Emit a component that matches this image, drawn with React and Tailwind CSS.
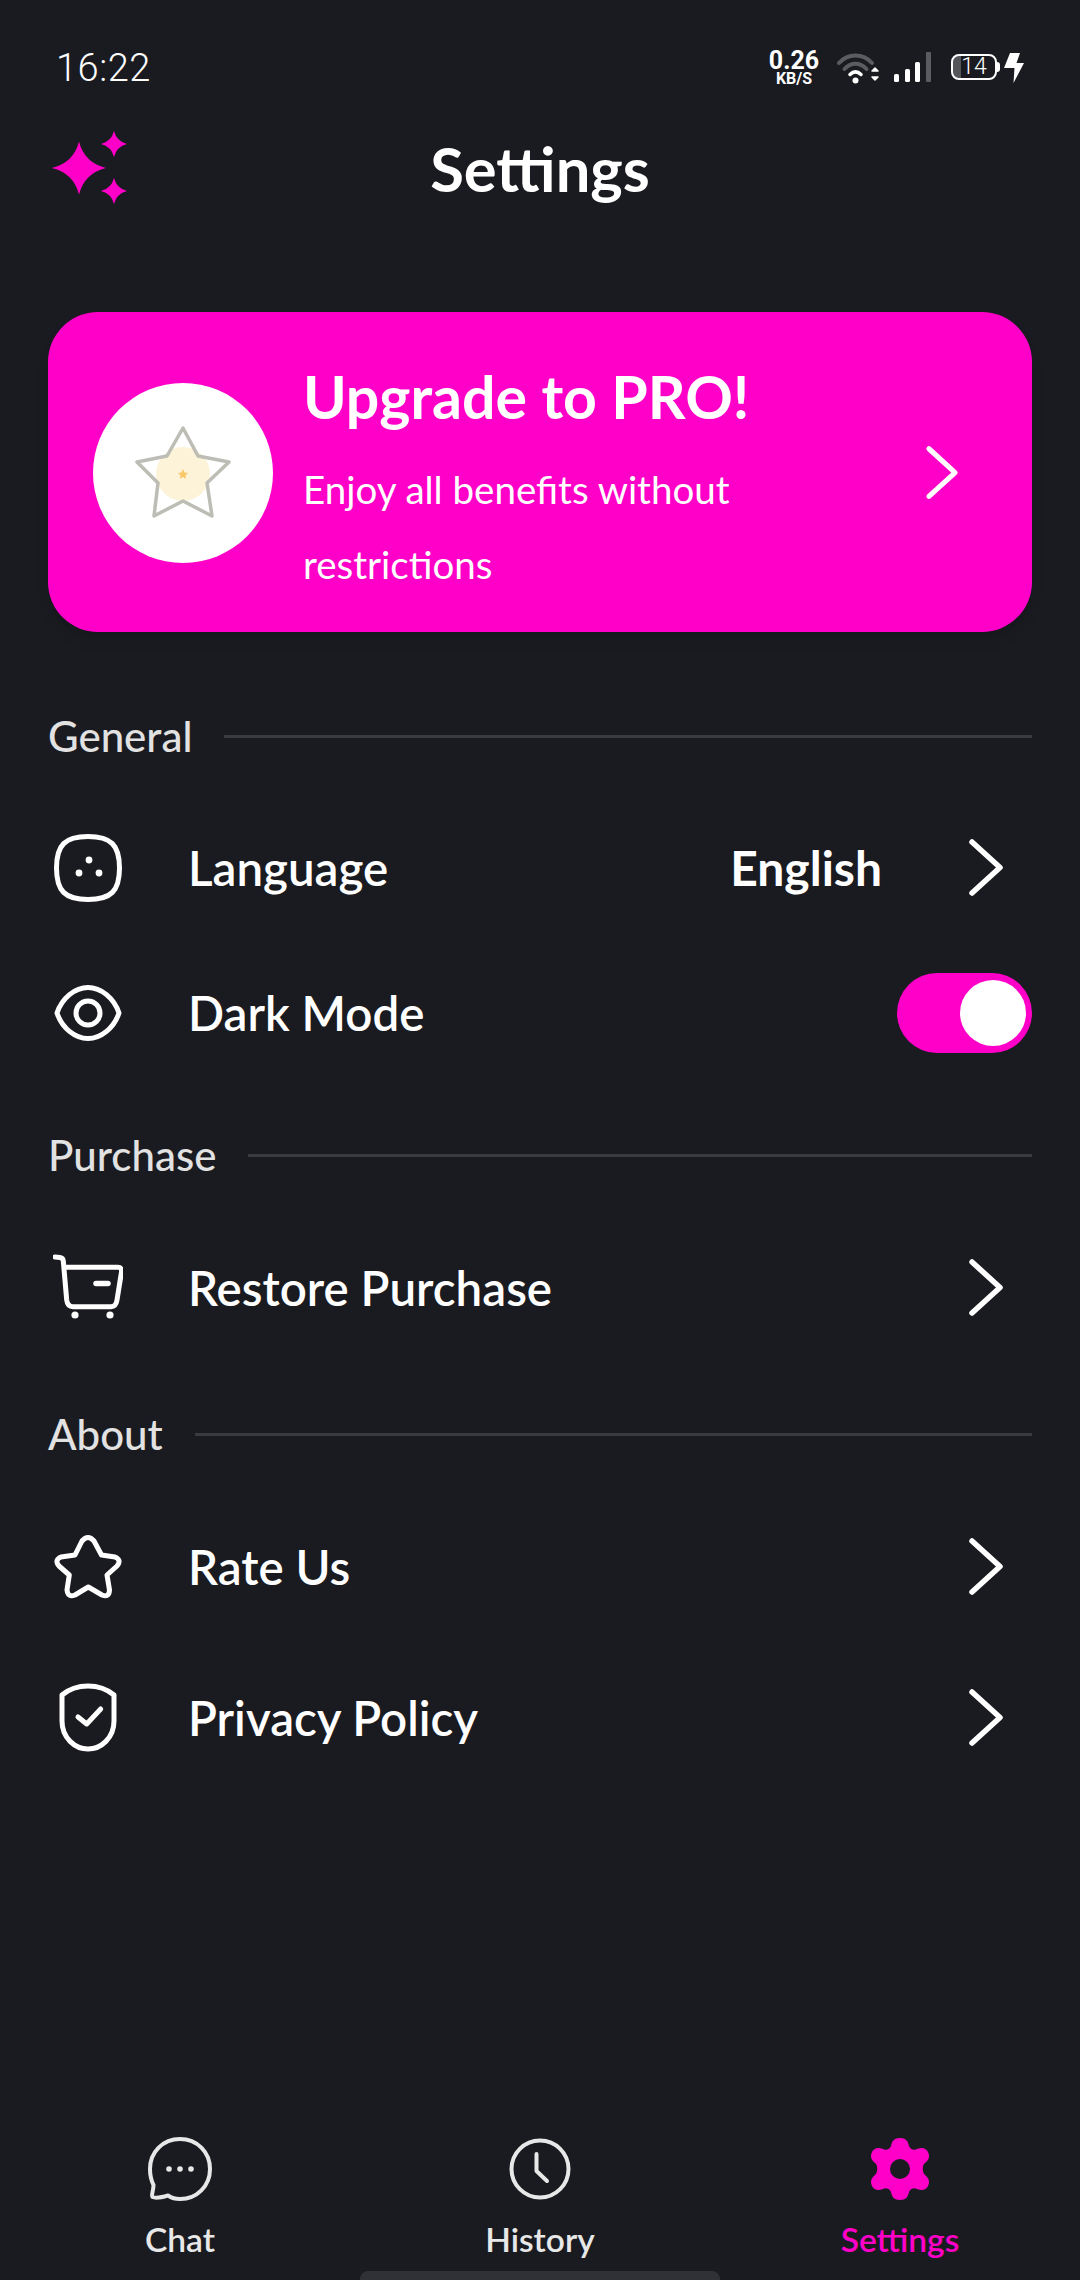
const font = { fontFamily: 'Lato, "Open Sans", sans-serif' };

function Sparkle({ cx, cy, w, h }) {
  const rx = w / 2;
  const ry = h / 2;
  const k = 0.2;
  return (
    <path
      d={`M${cx} ${cy - ry}Q${cx + rx * k} ${cy - ry * k} ${cx + rx} ${cy}Q${cx + rx * k} ${cy + ry * k} ${cx} ${cy + ry}Q${cx - rx * k} ${cy + ry * k} ${cx - rx} ${cy}Q${cx - rx * k} ${cy - ry * k} ${cx} ${cy - ry}Z`}
    />
  );
}

function Sparkles() {
  return (
    <svg width="76" height="76" viewBox="0 0 76 76" fill="#ff00c8">
      <Sparkle cx={27} cy={37} w={54} h={53} />
      <Sparkle cx={62} cy={13} w={26} h={26} />
      <Sparkle cx={62} cy={60} w={26} h={26} />
    </svg>
  );
}

function RowIcon({ children }) {
  return (
    <svg width="70" height="70" viewBox="0 0 70 70" fill="none" stroke="white" strokeWidth="5" strokeLinecap="round" strokeLinejoin="round" className="shrink-0">
      {children}
    </svg>
  );
}

function LanguageIcon() {
  return (
    <RowIcon>
      <path d="M35 3.5C58 3.5 66.5 12 66.5 35C66.5 58 58 66.5 35 66.5C12 66.5 3.5 58 3.5 35C3.5 12 12 3.5 35 3.5Z" />
      <circle cx="36" cy="27" r="3.4" fill="white" stroke="none" />
      <circle cx="26" cy="40" r="3.4" fill="white" stroke="none" />
      <circle cx="46" cy="40" r="3.4" fill="white" stroke="none" />
    </RowIcon>
  );
}

function EyeIcon() {
  return (
    <RowIcon>
      <path d="M4 35C9 20 22 9.5 35 9.5C48 9.5 61 20 66 35C61 50 48 60.5 35 60.5C22 60.5 9 50 4 35Z" />
      <circle cx="35" cy="35" r="12" />
    </RowIcon>
  );
}

function CartIcon() {
  return (
    <RowIcon>
      <path d="M2 4L7 4.5Q10 5 10.3 8L13.7 47Q14.5 53.7 20 53.7H58Q63 53.7 64 47L68.5 19Q69 14.3 65 14.3H12" />
      <path d="M43 30.5H55" strokeWidth="5.5" />
      <circle cx="22" cy="62" r="3.6" fill="white" stroke="none" />
      <circle cx="57" cy="62" r="3.6" fill="white" stroke="none" />
    </RowIcon>
  );
}

function StarIcon() {
  return (
    <RowIcon>
      <path d="M29 9Q35 2 41 9L48.5 23L62 25Q69 28 64 34L54 43L56.5 58Q56 66 49 63L35.3 55L22 63Q15 66 14 58L16.3 43L6 34Q1 28 8 25L22 23Z" />
    </RowIcon>
  );
}

function ShieldIcon() {
  return (
    <RowIcon>
      <path d="M35 3C45 3 55 7 61 12V38C61 55 48 66 35 66C22 66 9 55 9 38V12C15 7 25 3 35 3Z" />
      <path d="M25 34L33.7 41L47.7 26" />
    </RowIcon>
  );
}

function Chevron({ className }) {
  return (
    <svg width="38" height="60" viewBox="0 0 38 60" fill="none" stroke="white" strokeWidth="5.5" strokeLinecap="round" strokeLinejoin="round" className={className}>
      <path d="M5 4L33 29.5L5 55" />
    </svg>
  );
}

function SectionTitle({ title, className }) {
  return (
    <div className={`flex h-10 items-center gap-[32px] ${className}`}>
      <span className="text-[42px] font-medium leading-10 text-[#e2e2e2]">{title}</span>
      <div className="h-[3px] flex-1 bg-[#3a3b40]" />
    </div>
  );
}

function Row({ icon, label, className, children }) {
  return (
    <div className={`flex h-[100px] items-center ${className}`}>
      <div className="ml-[5px] mr-[65px]">{icon}</div>
      <span className="flex-1 text-[47.5px] font-semibold leading-none text-white">{label}</span>
      {children}
    </div>
  );
}

function RowChevron() {
  return <Chevron className="mr-[27px]" />;
}

function StatusBar() {
  return (
    <div className="flex h-[134px] shrink-0 items-center pl-[56px] pr-[56px] pt-[1px] text-white" style={{ fontFamily: 'Roboto, sans-serif' }}>
      <span className="text-[38px] font-light leading-none tracking-[0.5px]">16:22</span>
      <div className="ml-auto flex items-center">
        <div className="flex w-[50px] flex-col items-center font-bold">
          <span className="text-[25px] leading-[21px]">0.26</span>
          <span className="text-[16px] leading-[15px]">KB/S</span>
        </div>
        <svg width="44" height="34" viewBox="0 0 44 34" fill="none" strokeLinecap="round" className="ml-[18px]">
          <path d="M2 12C11 2 26 2 35 12" stroke="#5b5c60" strokeWidth="4" />
          <path d="M7.5 18C14 11 23 11 29.5 18" stroke="#5b5c60" strokeWidth="4" />
          <path d="M13 23.5C16.5 20 20.5 20 24 23.5" stroke="white" strokeWidth="3.5" />
          <circle cx="18.5" cy="29.5" r="3" fill="white" />
          <path d="M35 20L38 17L41 20Z" fill="white" stroke="white" strokeWidth="1.5" strokeLinejoin="round" />
          <path d="M35 26L38 29L41 26Z" fill="white" stroke="white" strokeWidth="1.5" strokeLinejoin="round" />
        </svg>
        <svg width="40" height="32" viewBox="0 0 40 32" className="ml-[12px]">
          <rect x="1" y="22" width="5" height="8" rx="1.5" fill="white" />
          <rect x="12" y="17" width="5" height="13" rx="1.5" fill="white" />
          <rect x="22" y="10" width="5" height="20" rx="1.5" fill="white" />
          <rect x="33" y="0" width="5" height="30" rx="1" fill="#5b5c60" />
        </svg>
        <div className="relative ml-[18px] -mt-[2px] flex h-[26px] w-[46px] items-center justify-center rounded-[8px] border-2 border-white bg-[linear-gradient(90deg,#55565a_0,#55565a_8px,transparent_8px)]">
          <span className="text-[23px] font-light leading-none">14</span>
          <div className="absolute -right-[5px] top-[6px] h-[10px] w-[3px] rounded-r-sm bg-white" />
        </div>
        <svg width="20" height="30" viewBox="0 0 20 30" fill="white" className="ml-[7px]">
          <path d="M6 0H16L12.5 10H20L9.5 30L10.5 15H0Z" />
        </svg>
      </div>
    </div>
  );
}

function NavItem({ icon, label, active }) {
  return (
    <div className="flex w-[200px] flex-col items-center">
      <div className="flex h-[66px] items-center justify-center">{icon}</div>
      <span className={`mt-[17px] text-[33.5px] font-semibold leading-[40px] ${active ? 'text-[#ff00c8]' : 'text-[#e8e8e8]'}`}>{label}</span>
    </div>
  );
}

function BottomNav() {
  return (
    <div className="mt-auto flex flex-col items-center">
      <div className="flex w-full justify-between pl-[80px] pr-[80px]">
        <NavItem
          label="Chat"
          icon={
            <svg width="66" height="66" viewBox="0 0 66 66" fill="none" stroke="#e8e8e8" strokeWidth="4" strokeLinejoin="round">
              <path d="M33 3C50 3 63 16 63 33C63 50 50 63 33 63C28 63 24 61.5 21 59.5C16 61 9 62.5 5.5 61C4 59 6.5 55 6.5 49C4 44 3 39 3 33C3 16 16 3 33 3Z" />
              <circle cx="22" cy="33" r="2.8" fill="#e8e8e8" stroke="none" />
              <circle cx="33" cy="33" r="2.8" fill="#e8e8e8" stroke="none" />
              <circle cx="44" cy="33" r="2.8" fill="#e8e8e8" stroke="none" />
            </svg>
          }
        />
        <NavItem
          label="History"
          icon={
            <svg width="62" height="62" viewBox="0 0 62 62" fill="none" stroke="#e8e8e8" strokeWidth="4" strokeLinecap="round" strokeLinejoin="round">
              <circle cx="31" cy="31" r="28.5" />
              <path d="M27.5 16V33L38 43" />
            </svg>
          }
        />
        <NavItem
          label="Settings"
          active
          icon={
            <svg width="60" height="62" viewBox="0 0 60 62" fill="#ff00c8">
              <path fillRule="evenodd" d="M30 0C36 0 38 3 39 8C40 11 44 13 47 11C52 9 56 10 58 14C60 18 59 22 55 25C52 27 52 34 55 37C59 40 60 44 58 48C56 52 52 53 47 51C44 49 40 51 39 54C38 59 36 62 30 62C24 62 22 59 21 54C20 51 16 49 13 51C8 53 4 52 2 48C0 44 1 40 5 37C8 34 8 27 5 25C1 22 0 18 2 14C4 10 8 9 13 11C16 13 20 11 21 8C22 3 24 0 30 0ZM30 21A10 10 0 1 0 30 41A10 10 0 1 0 30 21Z" />
            </svg>
          }
        />
      </div>
      <div className="mt-[12px] h-[9px] w-[360px] rounded-t-lg bg-[#303136]" />
    </div>
  );
}

export default function App() {
  return (
    <div className="flex h-[2280px] w-[1080px] flex-col overflow-hidden bg-[#1a1b20]" style={font}>
      <StatusBar />

      {/* Header */}
      <div className="relative flex h-[72px] shrink-0 items-center justify-center pb-[3px]">
        <div className="absolute left-[52px] top-[-3px]">
          <Sparkles />
        </div>
        <h1 className="text-[61.5px] font-bold leading-none text-white">Settings</h1>
      </div>

      <div className="flex flex-1 flex-col px-[48px]">
        {/* Upgrade card */}
        <div className="mt-[106px] flex h-[320px] shrink-0 items-center rounded-[50px] bg-[#ff00c8] pl-[45px] pt-[2px] shadow-lg">
          <div className="flex h-[180px] w-[180px] shrink-0 items-center justify-center rounded-full bg-white">
            <svg width="180" height="180" viewBox="0 0 180 180">
              <circle cx="90" cy="91" r="27" fill="#fdf3d8" />
              <polygon points="90,45 105,73 136,79 114,100 119,133 90,118 61,133 65,100 44,79 74,73" fill="none" stroke="#bdbdb5" strokeWidth="3.5" strokeLinejoin="round" />
              <polygon points="90,86 91.5,89.5 95,90 92.5,92.5 93,96 90,94 87,96 87.5,92.5 85,90 88.5,89.5" fill="#f9c86a" />
            </svg>
          </div>
          <div className="ml-[30px] flex w-[470px] flex-col pt-[18px] text-white">
            <span className="text-[59px] font-bold leading-[70px]">Upgrade to PRO!</span>
            <span className="mt-[20px] text-[38.5px] font-normal leading-[75px]">Enjoy all benefits without restrictions</span>
          </div>
          <Chevron className="ml-[151px] mr-auto h-[56px] w-[36px]" />
        </div>

        <SectionTitle title="General" className="mt-[84px]" />
        <Row icon={<LanguageIcon />} label="Language" className="mt-[62px]">
          <span className="mr-[85px] text-[48px] font-bold leading-none text-white">English</span>
          <RowChevron />
        </Row>
        <Row icon={<EyeIcon />} label="Dark Mode" className="mt-[45px]">
          <div className="flex h-[80px] w-[135px] items-center justify-end rounded-full bg-[#ff00c8] pr-[6px]">
            <div className="h-[66px] w-[66px] rounded-full bg-white" />
          </div>
        </Row>

        <SectionTitle title="Purchase" className="mt-[72px]" />
        <Row icon={<CartIcon />} label="Restore Purchase" className="mt-[63px]">
          <RowChevron />
        </Row>

        <SectionTitle title="About" className="mt-[76px]" />
        <Row icon={<StarIcon />} label="Rate Us" className="mt-[63px]">
          <RowChevron />
        </Row>
        <Row icon={<ShieldIcon />} label="Privacy Policy" className="mt-[51px]">
          <RowChevron />
        </Row>
      </div>

      <BottomNav />
    </div>
  );
}
